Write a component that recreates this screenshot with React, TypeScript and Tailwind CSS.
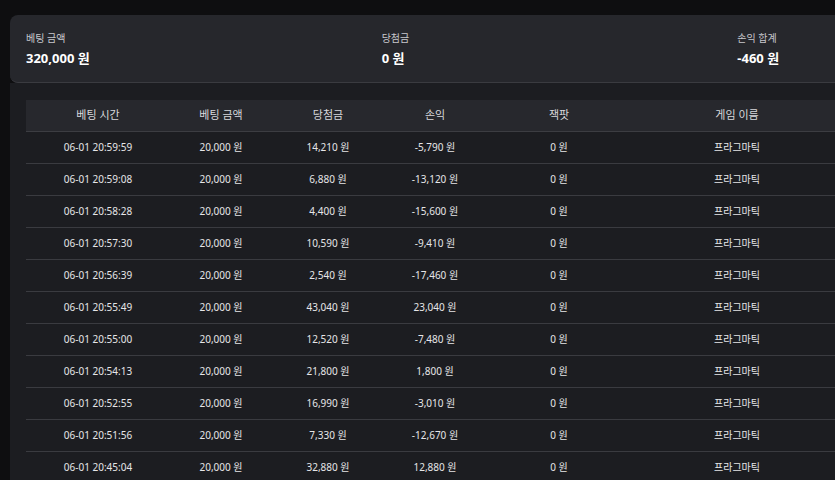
import React from "react";

const rows = [
  ["06-01 20:59:59", "14,210 원", "-5,790 원"],
  ["06-01 20:59:08", "6,880 원", "-13,120 원"],
  ["06-01 20:58:28", "4,400 원", "-15,600 원"],
  ["06-01 20:57:30", "10,590 원", "-9,410 원"],
  ["06-01 20:56:39", "2,540 원", "-17,460 원"],
  ["06-01 20:55:49", "43,040 원", "23,040 원"],
  ["06-01 20:55:00", "12,520 원", "-7,480 원"],
  ["06-01 20:54:13", "21,800 원", "1,800 원"],
  ["06-01 20:52:55", "16,990 원", "-3,010 원"],
  ["06-01 20:51:56", "7,330 원", "-12,670 원"],
  ["06-01 20:45:04", "32,880 원", "12,880 원"],
];

const cols = "grid grid-cols-[144px_102px_112px_102px_146px_210px]";

export default function App() {
  return (
    <div
      className="w-[835px] h-[480px] overflow-hidden bg-[#0e0e10] text-white"
      style={{ fontFamily: '"Noto Sans", "Noto Sans CJK KR", sans-serif' }}
    >
      <div className="pt-[15px] pl-[10px] w-[1200px]">
        <div className="bg-[#26272c] rounded-tl-lg rounded-bl-lg border-b border-[#3a3b40] h-[68px] px-4 pt-[16px] w-[1100px]">
          <div className="grid grid-cols-3 w-[1067px]">
            {[
              ["베팅 금액", "320,000 원"],
              ["당첨금", "0 원"],
              ["손익 합계", "-460 원"],
            ].map(([l, v]) => (
              <div key={l}>
                <div className="text-[10px] leading-[14px] text-[#c8c8cc]">{l}</div>
                <div className="text-[13px] leading-[18px] font-bold mt-[4px]">{v}</div>
              </div>
            ))}
          </div>
        </div>
        <div className="bg-[#1c1d21] pt-[17px] pl-4 h-[420px]">
          <div className={`${cols} bg-[#27282d] h-[32px] items-center text-[11px] text-[#d8d8dc] border-b border-[#3c3d42]`}>
            {["베팅 시간", "베팅 금액", "당첨금", "손익", "잭팟", "게임 이름"].map((h) => (
              <div key={h} className="text-center">{h}</div>
            ))}
          </div>
          {rows.map((r) => (
            <div
              key={r[0]}
              className={`${cols} h-[32px] items-center text-[10px] text-[#e6e6e8] border-b border-[#3a3b40]`}
            >
              <div className="text-center">{r[0]}</div>
              <div className="text-center">20,000 원</div>
              <div className="text-center">{r[1]}</div>
              <div className="text-center">{r[2]}</div>
              <div className="text-center">0 원</div>
              <div className="text-center">프라그마틱</div>
            </div>
          ))}
        </div>
      </div>
    </div>
  );
}
